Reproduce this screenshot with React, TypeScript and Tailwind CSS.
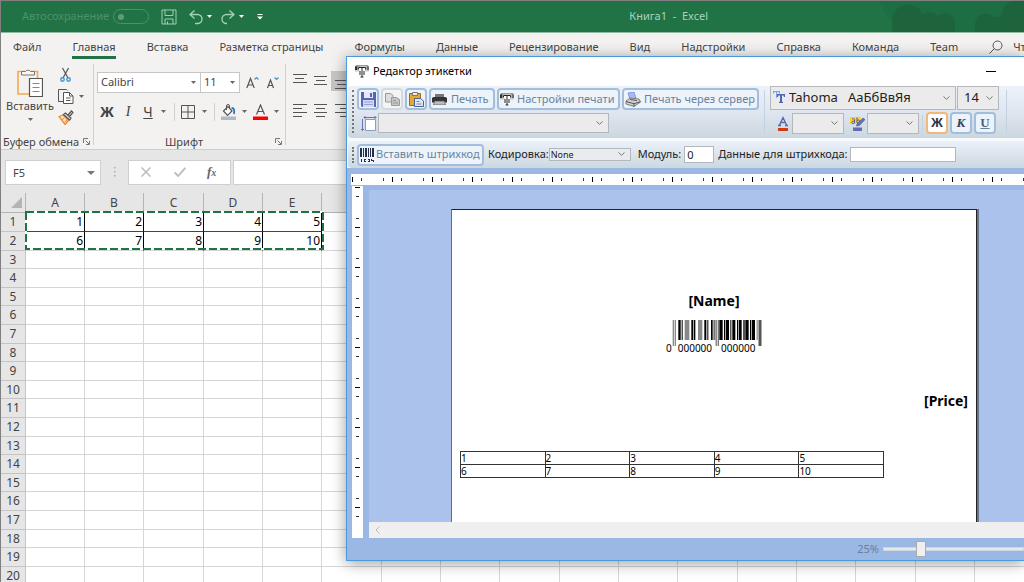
import type { ReactNode } from 'react'

const TABS = [
  'Файл',
  'Главная',
  'Вставка',
  'Разметка страницы',
  'Формулы',
  'Данные',
  'Рецензирование',
  'Вид',
  'Надстройки',
  'Справка',
  'Команда',
  'Team',
]
const COLUMNS = 'ABCDEFGHIJKLMNOPQ'.split('')
const ROWS = Array.from({ length: 20 }, (_, i) => i + 1)
const DATA = [
  [1, 2, 3, 4, 5],
  [6, 7, 8, 9, 10],
]

// x, width, height, fill
const BARS: [number, number, number, string][] = [
  [2, 4, 78, '#888'],
  [8, 4, 78, '#888'],
  [19, 7, 60, '#000'],
  [29, 3, 60, '#000'],
  [38, 14, 60, '#888'],
  [58, 5, 60, '#000'],
  [65, 5, 60, '#000'],
  [78, 13, 60, '#888'],
  [97, 6, 60, '#000'],
  [106, 3, 60, '#000'],
  [117, 5, 60, '#000'],
  [124, 6, 60, '#777'],
  [131, 3, 78, '#555'],
  [137, 4, 78, '#777'],
  [142, 10, 60, '#000'],
  [156, 4, 60, '#000'],
  [162, 9, 60, '#000'],
  [175, 3, 60, '#000'],
  [181, 9, 60, '#000'],
  [195, 4, 60, '#000'],
  [201, 8, 60, '#000'],
  [214, 4, 60, '#000'],
  [220, 10, 60, '#000'],
  [234, 4, 60, '#000'],
  [240, 9, 60, '#000'],
  [254, 3, 60, '#777'],
  [260, 3, 78, '#000'],
  [265, 3, 78, '#000'],
]

function Caret({ className = '' }: { className?: string }) {
  return (
    <svg className={`h-[3px] w-[5px] shrink-0 ${className}`} viewBox="0 0 5 3">
      <path d="M0 0h5L2.500 3z" fill="#666" />
    </svg>
  )
}

function Separator({ className = '' }: { className?: string }) {
  return <div className={`w-px shrink-0 ${className}`} />
}

function Launcher() {
  return (
    <svg className="h-[7px] w-[7px]" viewBox="0 0 7 7" fill="none" stroke="#777">
      <path d="M.5 5V.5H5M2.500 2.500l3.500 3.500M6.500 3v3.500H3" />
    </svg>
  )
}

type DropdownProps = {
  label: string
  value: string
  className: string
  textClass?: string
  flat?: boolean
}

function Dropdown({ label, value, className, textClass = '', flat }: DropdownProps) {
  return (
    <div
      className={`relative shrink-0 border ${
        flat ? 'border-[#c6c6c6] bg-white' : 'border-[#b4b7bb] bg-[#ebebeb]'
      } ${className}`}
    >
      <select
        aria-label={label}
        defaultValue={value}
        className={`block h-full w-full appearance-none bg-transparent outline-none ${textClass}`}
      >
        <option value={value}>{value}</option>
      </select>
      {flat ? (
        <Caret className="pointer-events-none absolute top-2 right-1" />
      ) : (
        <svg
          className="pointer-events-none absolute inset-y-0 right-[5px] my-auto h-1 w-[7px]"
          viewBox="0 0 7 4"
          fill="none"
          stroke="#777"
        >
          <path d="M.5.5l3 2.800 3-2.800" />
        </svg>
      )}
    </div>
  )
}

type ToolButtonProps = {
  children: ReactNode
  label?: string
  className?: string
  tone?: 'blue' | 'gray' | 'orange'
}

function ToolButton({ children, label, className = '', tone = 'blue' }: ToolButtonProps) {
  const tones = {
    blue: 'border-[#a3bedb] bg-[#edf3fa]',
    gray: 'border-[#d5dade] bg-[#f2f4f6]',
    orange: 'border-[#f2b878] bg-white',
  }
  return (
    <button
      type="button"
      aria-label={label}
      className={`flex h-[22px] shrink-0 items-center rounded-sm border-2 text-[11px] whitespace-nowrap text-[#68839f] ${tones[tone]} ${className}`}
    >
      {children}
    </button>
  )
}

function LabelPrinterIcon() {
  return (
    <svg className="h-[15px] w-4 shrink-0" viewBox="0 0 16 15">
      <path d="M2 1h12l1 2v4H1V3z" fill="#9a9a9a" />
      <path d="M1 2.500h5V6H1z" fill="#2e2e2e" />
      <path d="M11 2.500h4V6h-4z" fill="#6a6a6a" />
      <path d="M1 6h14v1.500H1z" fill="#c9c9c9" />
      <path d="M3.500 2.500h9v3.500H11v8H5.500V6h-2z" fill="#fff" />
      <path
        d="M4.500 5.500V3.500h7v2M8 3.500v9.500M6.500 13h3M6 7v4M10 7v4"
        fill="none"
        stroke="#222"
      />
    </svg>
  )
}

function TitleBar() {
  return (
    <header className="flex h-8 shrink-0 items-center border-b border-[#8fbaa2] bg-[#217346]">
      <label className="ml-[21px] flex items-center gap-[4px] text-[11px] text-[#4d9169]">
        Автосохранение
        <input
          type="checkbox"
          disabled
          className="flex h-[15px] w-9 appearance-none items-center rounded-full border border-[#4d9169] pl-1 before:size-1.5 before:rounded-full before:bg-[#5d9c77]"
        />
      </label>
      <button type="button" aria-label="Сохранить" className="ml-3">
        <svg className="size-4" viewBox="0 0 16 16" fill="none" stroke="#9fd0b3">
          <path d="M1 1h14v14H1zM4 1v5.500h8V1M4 15v-5h8v5M6.500 15v-2.500" />
        </svg>
      </button>
      <button type="button" aria-label="Отменить" className="ml-3 flex items-center gap-1">
        <svg className="h-4 w-[14px]" viewBox="0 0 14 16" fill="none" stroke="#9fd0b3" strokeWidth="1.400">
          <path d="M5.500 1.500L1 5.500l4.500 4M1 5.500h7.500a4.300 4.300 0 010 9H6" />
        </svg>
        <svg className="h-[3px] w-[5px]" viewBox="0 0 5 3">
          <path d="M0 0h5L2.500 3z" fill="#fff" />
        </svg>
      </button>
      <button type="button" aria-label="Вернуть" className="ml-[9px] flex items-center gap-1">
        <svg className="h-4 w-[14px]" viewBox="0 0 14 16" fill="none" stroke="#9fd0b3" strokeWidth="1.400">
          <path d="M8.500 1.500l4.500 4-4.500 4M13 5.500H5.500a4.300 4.300 0 000 9H6" />
        </svg>
        <svg className="h-[3px] w-[5px]" viewBox="0 0 5 3">
          <path d="M0 0h5L2.500 3z" fill="#fff" />
        </svg>
      </button>
      <button type="button" aria-label="Настройка панели" className="ml-[13px]">
        <svg className="h-[6px] w-[6px]" viewBox="0 0 6 6" fill="#fff">
          <path d="M.5 0h5v1h-5zM0 2.500h6L3 5.500z" />
        </svg>
      </button>
      <h1 className="ml-auto text-[11px] whitespace-pre text-[#a9d3ba]">Книга1  -  Excel</h1>
      <svg className="h-[31px] w-[316px] shrink-0" viewBox="0 0 316 31" fill="#1d623b">
        <path d="M170 0h146v31H190z" fill="#1e6c41" opacity=".7" />
        <path
          d="M184 31v-12a16 16 0 0131-5 10 10 0 0115 1 10 10 0 0117 7v9zM267 31v-8a11 11 0 0119-7 10 10 0 017 1 18 18 0 0123-18v32z"
          opacity=".75"
        />
      </svg>
    </header>
  )
}

function TabStrip() {
  return (
    <nav className="flex h-[30px] shrink-0 items-start gap-[31px] overflow-hidden bg-[#f3f2f1] pl-3 text-[11px] whitespace-nowrap text-[#444]">
      {TABS.map((tab) => (
        <button
          key={tab}
          type="button"
          className={`h-[26px] shrink-0 border-b-[3px] pt-[5px] ${
            tab === 'Главная' ? 'border-[#217346]' : 'border-transparent'
          }`}
        >
          {tab}
        </button>
      ))}
      <button type="button" className="flex h-[28px] shrink-0 items-center gap-[10px]">
        <svg className="size-[14px]" viewBox="0 0 14 14" fill="none" stroke="#555">
          <circle cx="8.500" cy="5.500" r="4.500" />
          <path d="M5.300 8.700L.5 13.500" />
        </svg>
        Что вы хотите сделать?
      </button>
    </nav>
  )
}

function AlignIcon({ lines }: { lines: [number, number, number][] }) {
  return (
    <svg className="h-5 w-[14px]" viewBox="0 0 14 20" stroke="#555">
      {lines.map(([x, y, w]) => (
        <path key={y} d={`M${x} ${y}.5h${w}`} />
      ))}
    </svg>
  )
}

function Ribbon() {
  return (
    <div className="flex h-[87px] shrink-0 items-stretch overflow-hidden border-b border-[#d0cecc] bg-[#f3f2f1] text-[11px] text-[#444]">
      <section className="flex w-[92px] shrink-0 flex-col">
        <div className="flex min-h-0 flex-1 pt-1 pl-[5px]">
          <button type="button" className="flex w-12 flex-col items-center justify-start">
            <svg className="h-[30px] w-[26px] shrink-0" viewBox="0 0 26 30" fill="none">
              <path d="M1 4.500h19.500V27H1z" stroke="#f5a94e" strokeWidth="1.600" />
              <path d="M4.500 8V4.500h4a3 3 0 015 0h4V8z" fill="#f8f8f8" stroke="#777" />
              <path d="M12.500 11.500h13v18h-13z" fill="#fff" stroke="#555" strokeWidth="1.200" />
              <path d="M15.500 16.500h7M15.500 20.500h7M15.500 24.500h7" stroke="#888" />
            </svg>
            <span className="mt-[1px] leading-4">Вставить</span>
            <Caret className="mt-1" />
          </button>
          <div className="ml-1 flex flex-col items-start gap-[6px]">
            <button type="button" aria-label="Вырезать" className="pl-[2px]">
              <svg className="h-4 w-[11px]" viewBox="0 0 11 16" fill="none" stroke="#555" strokeWidth="1.200">
                <path d="M2.500 1l5.500 10M8.500 1L3 11" />
                <g stroke="#3a96d6" strokeWidth="1.400">
                  <circle cx="2.500" cy="12.500" r="1.700" />
                  <circle cx="8.500" cy="12.500" r="1.700" />
                </g>
              </svg>
            </button>
            <button type="button" aria-label="Копировать" className="flex items-center gap-[5px]">
              <svg className="h-[15px] w-4" viewBox="0 0 16 15" fill="none" stroke="#555">
                <path d="M5 12.500H.5V.5h8l1 1" />
                <path d="M5.500 3.500h6l3.500 3.500v7.500H5.500z" fill="#fff" />
                <path d="M11.500 3.500V7H15M8 9h4.500M8 11.500h4.500" />
              </svg>
              <Caret />
            </button>
            <button type="button" aria-label="Формат по образцу">
              <svg className="h-[15px] w-4" viewBox="0 0 16 15" fill="none">
                <path d="M1 6.500l4-1.500 5.500 5.500L7 14.500z" fill="#fbe0c0" stroke="#ee8b3a" strokeWidth="1.300" />
                <path d="M4 10l2-2M6.500 12.500L9 10" stroke="#ee8b3a" />
                <path d="M5.500 4.500l2-1.500 5.500 5-1.500 2zM10 5l3.500-4 1.500 1.500L11.500 6.500" fill="#ddd" stroke="#555" strokeWidth="1.200" />
              </svg>
            </button>
          </div>
        </div>
        <footer className="flex h-[15px] shrink-0 items-center justify-between pr-[3px] pl-[2px] leading-3">
          Буфер обмена
          <Launcher />
        </footer>
      </section>
      <Separator className="mt-px mb-1 bg-[#d2d0ce]" />
      <section className="flex w-[191px] shrink-0 flex-col">
        <div className="flex-1 pt-[9px] pl-[3px]">
          <div className="flex items-center">
            <Dropdown flat label="Шрифт" value="Calibri" className="h-[21px] w-[104px]" textClass="pl-[3px] text-[11px]" />
            <Dropdown flat label="Размер шрифта" value="11" className="-ml-px h-[21px] w-10" textClass="pl-[3px] text-[11px]" />
            <button type="button" aria-label="Увеличить размер" className="ml-[6px]">
              <svg className="h-[14px] w-[13px]" viewBox="0 0 13 14" fill="none" stroke="#555" strokeWidth="1.200">
                <path d="M.8 12L4.500 2.500 8.200 12M2 9h5" />
                <path d="M8.500 3.500l2-2 2 2" stroke="#3a96d6" />
              </svg>
            </button>
            <button type="button" aria-label="Уменьшить размер" className="ml-[7px]">
              <svg className="h-[14px] w-[13px]" viewBox="0 0 13 14" fill="none" stroke="#555" strokeWidth="1.200">
                <path d="M1.500 12l3-8 3 8M2.500 9.500h4" />
                <path d="M8.500 1.500l2 2 2-2" stroke="#3a96d6" />
              </svg>
            </button>
          </div>
          <div className="mt-2 flex h-[21px] items-center text-[14px]">
            <button type="button" className="w-5 font-bold">Ж</button>
            <button type="button" className="ml-[2px] w-[18px] font-['Liberation_Serif',serif] italic">I</button>
            <button type="button" className="ml-[2px] w-[18px] underline">Ч</button>
            <Caret className="ml-1" />
            <Separator className="ml-2 h-[18px] bg-[#d2d0ce]" />
            <button type="button" aria-label="Границы" className="ml-[6px] flex items-center gap-[7px]">
              <svg className="size-[14px]" viewBox="0 0 14 14" fill="none" stroke="#555">
                <path d="M.5.5h13v13H.5zM7 .5v13M.5 7h13" />
              </svg>
              <Caret />
            </button>
            <Separator className="ml-[7px] h-[18px] bg-[#d2d0ce]" />
            <button type="button" aria-label="Цвет заливки" className="ml-[6px] flex items-center gap-[6px]">
              <svg className="h-4 w-[15px]" viewBox="0 0 15 16" fill="none">
                <path d="M2.500 7L7 2.500l4 4.500-4.500 4.500z" fill="#fff" stroke="#555" strokeWidth="1.200" />
                <path d="M5.500 6V2a1.500 1.500 0 013 0v2.500" stroke="#555" />
                <path d="M10.500 4c3 0 3 2.500 2.500 6" stroke="#2f75b5" strokeWidth="1.800" />
                <path d="M0 12.500h15V16H0z" fill="#adb9ca" />
              </svg>
              <Caret />
            </button>
            <button type="button" aria-label="Цвет текста" className="ml-[6px] flex items-center gap-[6px]">
              <svg className="h-4 w-[15px]" viewBox="0 0 15 16" fill="none">
                <path d="M3.500 10.500L7.500 1l4 9.500M5 7.500h5" stroke="#555" strokeWidth="1.200" />
                <path d="M0 12.500h15V16H0z" fill="#f00" />
              </svg>
              <Caret />
            </button>
          </div>
        </div>
        <footer className="flex h-[15px] shrink-0 items-center pr-[3px] pl-[3px] leading-3">
          <span className="flex-1 pr-1 text-center">Шрифт</span>
          <Launcher />
        </footer>
      </section>
      <Separator className="mt-px mb-1 bg-[#d2d0ce]" />
      <section className="flex flex-col gap-[9px] pt-2 pl-[7px]">
        <div className="flex">
          <button type="button" aria-label="По верхнему краю" className="w-[20px]">
            <AlignIcon lines={[[0, 3, 14], [2, 7, 9], [0, 11, 14]]} />
          </button>
          <button type="button" aria-label="По середине" className="w-[18px] pl-[1px]">
            <AlignIcon lines={[[0, 5, 13], [2, 9, 9], [0, 13, 13]]} />
          </button>
          <button type="button" aria-label="По нижнему краю" className="bg-[#c8c6c4] px-1">
            <AlignIcon lines={[[0, 9, 14], [2, 13, 9], [0, 17, 14]]} />
          </button>
        </div>
        <div className="flex">
          <button type="button" aria-label="По левому краю" className="w-[20px]">
            <AlignIcon lines={[[0, 4, 14], [0, 8, 9], [0, 12, 14], [0, 16, 9]]} />
          </button>
          <button type="button" aria-label="По центру" className="w-[18px] pl-[1px]">
            <AlignIcon lines={[[0, 4, 13], [2, 8, 9], [0, 12, 13], [2, 16, 9]]} />
          </button>
          <button type="button" aria-label="По правому краю" className="px-1">
            <AlignIcon lines={[[0, 4, 14], [5, 8, 9], [0, 12, 14], [5, 16, 9]]} />
          </button>
        </div>
      </section>
    </div>
  )
}

function FormulaBar() {
  return (
    <div className="flex h-[43px] shrink-0 items-center bg-[#e6e6e6] pt-px pl-1">
      <div className="relative h-[25px] w-24 border border-[#cfcfcf] bg-white">
        <input
          aria-label="Имя ячейки"
          defaultValue="F5"
          className="block h-full w-full pl-[7px] text-[11px] text-[#444] outline-none"
        />
        <svg className="pointer-events-none absolute top-[10px] right-[5px] h-1 w-2" viewBox="0 0 8 4">
          <path d="M0 0h8L4 4z" fill="#777" />
        </svg>
      </div>
      <svg className="ml-3 h-[10px] w-[3px]" viewBox="0 0 3 10" fill="#aaa">
        <path d="M1 0h1.500v1.500H1zM1 4h1.500v1.500H1zM1 8h1.500v1.500H1z" />
      </svg>
      <div className="ml-3 flex h-[25px] w-[103px] shrink-0 items-center border border-[#cfcfcf] bg-white">
        <button type="button" aria-label="Отмена" className="ml-3">
          <svg className="size-[10px]" viewBox="0 0 10 10" stroke="#bbb" strokeWidth="1.500">
            <path d="M.5.5l9 9M9.500.5l-9 9" />
          </svg>
        </button>
        <button type="button" aria-label="Ввод" className="ml-[23px]">
          <svg className="h-[10px] w-3" viewBox="0 0 12 10" fill="none" stroke="#bbb" strokeWidth="1.800">
            <path d="M.7 5.500L4.200 9 11.300.8" />
          </svg>
        </button>
        <button
          type="button"
          className="ml-[21px] font-['Liberation_Serif',serif] text-[13px] font-bold text-[#666] italic"
        >
          f<span className="text-[10px]">x</span>
        </button>
      </div>
      <input
        aria-label="Строка формул"
        className="ml-[2px] h-[25px] min-w-0 flex-1 border border-[#cfcfcf] bg-white outline-none"
      />
    </div>
  )
}

function Sheet() {
  return (
    <div className="relative min-h-0 flex-1 overflow-hidden bg-white">
      <table className="w-max table-fixed border-separate border-spacing-0 text-[12px] leading-4">
        <thead>
          <tr className="h-5 bg-[#e6e6e6] text-[#444]">
            <th className="w-[25px] border-r border-b border-[#b4b4b4] p-0">
              <svg className="ml-[10px] size-[11px]" viewBox="0 0 11 11">
                <path d="M11 0v11H0z" fill="#b4b4b4" />
              </svg>
            </th>
            {COLUMNS.map((col, i) => (
              <th
                key={col}
                className={`border-r border-b border-[#b4b4b4] p-0 font-normal ${
                  i % 3 === 2 ? 'w-[60px]' : 'w-[59px]'
                }`}
              >
                {col}
              </th>
            ))}
          </tr>
        </thead>
        <tbody>
          {ROWS.map((row) => (
            <tr key={row} className={row % 5 === 3 || row % 5 === 0 ? 'h-[18px]' : 'h-[19px]'}>
              <th className="border-r border-b border-[#c4c4c4] bg-[#e6e6e6] p-0 font-normal text-[#444]">
                {row}
              </th>
              {COLUMNS.map((col, i) => {
                const value = DATA[row - 1]?.[i]
                return (
                  <td
                    key={col}
                    className={`border-r border-b p-0 pr-[1px] text-right text-black ${
                      value === undefined
                        ? 'border-[#d6d6d6]'
                        : row === 1
                          ? 'border-r-black border-b-[#444]'
                          : 'border-r-black border-b-[#d6d6d6]'
                    }`}
                  >
                    {value}
                  </td>
                )
              })}
            </tr>
          ))}
        </tbody>
      </table>
      <svg className="pointer-events-none absolute top-[18px] left-6 h-10 w-[300px]" fill="none">
        <rect x="1" y="1" width="297" height="37" stroke="#fff" strokeWidth="2" />
        <rect x="1" y="1" width="297" height="37" stroke="#217346" strokeWidth="2" strokeDasharray="8 3" />
      </svg>
    </div>
  )
}

function Grip({ className = '' }: { className?: string }) {
  return <div className={`w-0 shrink-0 border-l-2 border-dotted border-[#777] ${className}`} />
}

function MainToolbar() {
  return (
    <div className="flex h-[52px] shrink-0 overflow-hidden rounded-l bg-linear-to-b from-[#edf2fa] via-[#dfe6ef] to-[#cbd7df] pl-1">
      <Grip className="mt-1 mb-[5px]" />
      <div className="ml-[3px] flex shrink-0 flex-col gap-[3px] pt-[2px]">
        <div className="flex gap-[2px]">
          <ToolButton label="Сохранить" className="w-[22px] justify-center">
            <svg className="size-[15px] shrink-0" viewBox="0 0 15 15">
              <path d="M0 0h15v15H1l-1-1z" fill="#5b63b5" />
              <path d="M3 0h9v6H3z" fill="#e4e8fa" />
              <path d="M9 1h2v4H9z" fill="#5b63b5" />
              <path d="M2 8h11v7H2z" fill="#d5daf2" />
              <path d="M3 10h9M3 12.500h9" stroke="#9aa1d4" />
            </svg>
          </ToolButton>
          <ToolButton label="Копировать" tone="gray" className="w-[22px] justify-center">
            <svg className="h-[13px] w-[15px] shrink-0" viewBox="0 0 15 13" fill="#ddd" stroke="#9a9a9a">
              <path d="M.5.5h5l2.500 2v6.500H.5z" />
              <path d="M6.500 4.500h5l3 2v6h-8z" fill="#c4c4c4" />
              <path d="M8 7.500h3M8 10h5" stroke="#999" />
            </svg>
          </ToolButton>
          <ToolButton label="Вставить" className="w-[22px] justify-center">
            <svg className="size-[15px] shrink-0" viewBox="0 0 15 15">
              <path d="M.5 1.500h11v12H.5z" fill="#e5a92f" stroke="#9b6c12" />
              <path d="M3.500.5h5v3h-5z" fill="#eee" stroke="#777" />
              <path d="M5.500 6.500h6l3 2.500v5.500h-9z" fill="#dfe8fb" stroke="#4b5f9b" />
              <path d="M7.500 9.500h3M7.500 12h5" stroke="#6d82be" />
            </svg>
          </ToolButton>
          <ToolButton className="w-[66px] gap-1 pl-px">
            <svg className="h-[11px] w-[15px] shrink-0" viewBox="0 0 15 11">
              <path d="M3 0h9v4H3z" fill="#777" />
              <path d="M0 4l1.500-1h12L15 4v4.500H0z" fill="#333" />
              <path d="M2.500 7h10l1 4h-12z" fill="#bbb" stroke="#555" strokeWidth=".7" />
            </svg>
            Печать
          </ToolButton>
          <ToolButton className="w-[123px] gap-[2px]">
            <LabelPrinterIcon />
            Настройки печати
          </ToolButton>
          <ToolButton className="w-[137px] gap-[3px] pl-[1px]">
            <svg className="h-[15px] w-4 shrink-0" viewBox="0 0 16 15">
              <path d="M3 1l6-1 2 6-6 1.500z" fill="#a9b9f5" stroke="#6b7fd6" strokeWidth=".7" />
              <path d="M1 9l4-3 9 1 1.500 3L9 14.500 1 12z" fill="#d0d0d0" stroke="#666" strokeWidth=".8" />
              <path d="M1 9.500l8 2.200 6.500-2M9 12v2.500" stroke="#555" fill="none" />
              <path d="M5 7.500l7 1" stroke="#555" />
            </svg>
            Печать через сервер
          </ToolButton>
        </div>
        <div className="flex items-center pl-1">
          <svg className="h-[15px] w-4" viewBox="0 0 16 15" fill="none" stroke="#6675b8">
            <path d="M4.500 3.500h10v11h-10z" fill="#fff" stroke="#8d99cc" />
            <path d="M3 1.500h12M1.500 3v11.500M4.500 0L3 1.500 4.500 3M13.500 0L15 1.500 13.500 3M0 13l1.500 1.500L3 13" />
          </svg>
          <Dropdown label="Объект" value="" className="ml-px h-5 w-[231px]" />
        </div>
      </div>
      <Separator className="mx-[5px] mt-1 mb-[5px] bg-[#c3d2e0]" />
      <div className="flex shrink-0 flex-col gap-[2px]">
        <div className="flex gap-px">
          <div className="relative">
            <Dropdown
              label="Гарнитура"
              value={'Tahoma\u00a0\u00a0\u00a0АаБбВвЯя'}
              className="h-6 w-[186px]"
              textClass="pl-[18px] text-[13px] text-[#222]"
            />
            <svg className="pointer-events-none absolute top-[5px] left-[3px] h-3 w-3" viewBox="0 0 12 12">
              <path d="M0 0h7v2.500H6L5.500 1H4v6H3V1H1.500L1 2.500H0z" fill="#7aa2ef" />
              <path d="M4 3h8v3h-1l-.5-1.500H9v6l1 .5v1H6v-1l1-.5v-6H5.500L5 6H4z" fill="#5167b8" />
            </svg>
          </div>
          <Dropdown label="Кегль" value="14" className="h-6 w-[42px]" textClass="pl-[6px] text-[13px] text-[#222]" />
        </div>
        <div className="flex items-center pl-[7px]">
          <svg className="h-[15px] w-3" viewBox="0 0 12 15">
            <path d="M2.500 9L6 1.500 9.500 9M4 6.500h4.500M1 9.500h3M8 9.500h3" fill="none" stroke="#5b67ae" strokeWidth="1.300" />
            <path d="M1 12h10v3H1z" fill="#cf3a10" />
          </svg>
          <Dropdown label="Цвет шрифта" value="" className="ml-[3px] h-[21px] w-[52px]" />
          <svg className="ml-[6px] h-[15px] w-[15px]" viewBox="0 0 15 15">
            <path d="M0 1h11v7H0z" fill="#f7d232" />
            <path d="M4.500 5.500c-2-1-3 .3-2.500 1.500s2 .7 2.500 0V3.500c-.5-1-1.500-1-2.500-.5M7 1.500v5.500c2 .8 3-.5 2.500-2S8 4 7 4.500" fill="none" stroke="#555c9c" />
            <path d="M7 8l6-6 2 1.500L9.500 9.500 6.500 10z" fill="#6674bd" stroke="#434f94" strokeWidth=".6" />
            <path d="M3 11.500h9V15H3z" fill="#5f6eb5" />
          </svg>
          <Dropdown label="Цвет фона" value="" className="ml-[2px] h-[21px] w-[52px]" />
          <Separator className="mx-[3px] h-4 bg-[#c3d2e0]" />
          <div className="flex gap-[2px]">
            <ToolButton tone="orange" className="w-[22px] justify-center font-bold">
              <span className="text-[12px] text-[#273247]">Ж</span>
            </ToolButton>
            <ToolButton className="w-[22px] justify-center font-['Liberation_Serif',serif] font-bold italic">
              <span className="text-[13px] text-[#33425e]">К</span>
            </ToolButton>
            <ToolButton className="w-[22px] justify-center font-['Liberation_Serif',serif] font-bold underline">
              <span className="text-[13px] text-[#4b5f80]">U</span>
            </ToolButton>
          </div>
        </div>
      </div>
      <Separator className="ml-[7px] mt-1 mb-[5px] bg-[#c3d2e0]" />
    </div>
  )
}

function BarcodeToolbar() {
  return (
    <div className="mt-[3px] flex h-[27px] shrink-0 items-center overflow-hidden rounded-l bg-linear-to-b from-[#ecf1fa] to-[#ccd8e0] pl-1 text-[11px] whitespace-nowrap text-[#222]">
      <Grip className="h-4" />
      <ToolButton className="ml-[3px] w-[127px] gap-[2px] pl-px">
        <svg className="h-[14px] w-[14px] shrink-0" viewBox="0 0 14 14" fill="#26304a">
          <path d="M0 0h2v9H0zM3 0h1v9H3zM5 0h2v9H5zM8 0h1v9H8zM10 0h1v9h-1zM12 0h2v9h-2z" />
          <path d="M1 11h1v3H1zM4 11h2v1H5v1h1v1H4zM8 11h2v3H8v-1h1v-1H8zM11 11h1v1h2v2h-1v-1h-2z" />
        </svg>
        Вставить штрихкод
      </ToolButton>
      <label htmlFor="encoding" className="ml-1">Кодировка:</label>
      <div className="relative h-[13px] w-[82px] shrink-0 border border-[#b4b7bb] bg-[#e9ecef]">
        <select
          id="encoding"
          defaultValue="None"
          className="block h-full w-full appearance-none pl-px text-[9px] leading-[11px] outline-none"
        >
          <option>None</option>
        </select>
        <svg
          className="pointer-events-none absolute top-[3px] right-[5px] h-1 w-[7px]"
          viewBox="0 0 7 4"
          fill="none"
          stroke="#777"
        >
          <path d="M.5.5l3 2.800 3-2.800" />
        </svg>
      </div>
      <label htmlFor="module" className="ml-[7px]">Модуль:</label>
      <input
        id="module"
        defaultValue="0"
        className="ml-[3px] h-[17px] w-[30px] shrink-0 border border-[#b4b7bb] bg-white pl-[2px] outline-none"
      />
      <label htmlFor="barcode-data" className="ml-1">Данные для штрихкода:</label>
      <input
        id="barcode-data"
        className="ml-[2px] h-[15px] w-[106px] shrink-0 border border-[#b4b7bb] bg-white outline-none"
      />
    </div>
  )
}

function Barcode() {
  return (
    <div className="flex w-[96px] flex-col">
      <svg className="ml-[6px] h-[26px] w-[90px]" viewBox="0 0 270 78">
        {BARS.map(([x, w, h, fill]) => (
          <rect key={x} x={x} y="0" width={w} height={h} fill={fill} />
        ))}
      </svg>
      <div className="-mt-1 flex text-[10px] leading-3">
        <span>0</span>
        <span className="ml-[6px]">000000</span>
        <span className="ml-[9px]">000000</span>
      </div>
    </div>
  )
}

function LabelPage() {
  return (
    <div className="flex w-[526px] shrink-0 flex-col border border-b-0 border-[#222] border-l-[#5d6f8c] bg-white text-black shadow-[2px_0_0_#66758c]">
      <p className="mt-[81px] text-center text-[14px] leading-5 font-bold">[Name]</p>
      <div className="mt-[9px] flex justify-center">
        <Barcode />
      </div>
      <p className="mt-[37px] pr-2 text-right text-[14px] leading-5 font-bold">[Price]</p>
      <table className="mt-10 ml-2 w-[424px] table-fixed border-collapse text-[10px] leading-3">
        <tbody>
          {DATA.map((row) => (
            <tr key={row[0]}>
              {row.map((value) => (
                <td key={value} className="border border-[#333] p-0">
                  {value}
                </td>
              ))}
            </tr>
          ))}
        </tbody>
      </table>
    </div>
  )
}

function Workspace() {
  return (
    <div className="flex min-h-0 flex-1 flex-col bg-[#9bb8e5] pt-[6px] pl-1">
      <svg className="h-[11px] w-full shrink-0 bg-white">
        <defs>
          <pattern id="ruler-x" width="40" height="11" patternUnits="userSpaceOnUse">
            <path d="M1 3h1v5H1z" fill="#000" />
            <path d="M10 4h1v3h-1zM32 4h1v3h-1z" fill="#333" />
          </pattern>
        </defs>
        <rect width="100%" height="11" fill="url(#ruler-x)" />
      </svg>
      <div className="flex min-h-0 flex-1 gap-[6px] pl-px">
        <svg className="mt-px h-full w-[11px] shrink-0 bg-white">
          <defs>
            <pattern id="ruler-y" width="11" height="40" patternUnits="userSpaceOnUse">
              <path d="M3 1h5v1H3z" fill="#000" />
              <path d="M4 10h3v1H4zM4 32h3v1H4z" fill="#333" />
            </pattern>
          </defs>
          <rect width="11" height="100%" fill="url(#ruler-y)" />
        </svg>
        <div className="mt-[5px] flex min-w-0 flex-1 flex-col">
          <div className="flex min-h-0 flex-1 items-stretch overflow-hidden bg-[#aac2ec] pt-[19px] pl-[82px]">
            <LabelPage />
          </div>
          <div className="h-4 shrink-0 bg-[#efefef]">
            <button type="button" aria-label="Прокрутить влево" className="flex h-full w-4 items-center justify-center">
              <svg className="h-2 w-[5px]" viewBox="0 0 5 8" fill="none" stroke="#bbb">
                <path d="M4.500.5L1 4l3.500 3.500" />
              </svg>
            </button>
          </div>
        </div>
      </div>
    </div>
  )
}

function LabelEditor() {
  return (
    <section className="absolute top-[55px] right-0 bottom-[21px] left-[345px] flex flex-col border-y border-l border-[#4a9ae0] bg-white shadow-[0_2px_14px_rgba(0,0,0,0.4)]">
      <header className="flex h-[29px] shrink-0 items-center pb-px pl-[7px]">
        <LabelPrinterIcon />
        <h2 className="ml-[3px] text-[11px] text-black">Редактор этикетки</h2>
        <button type="button" aria-label="Свернуть" className="mr-7 ml-auto h-4 w-[10px]">
          <span className="block h-px bg-black" />
        </button>
      </header>
      <div className="flex min-h-0 flex-1 flex-col">
        <div className="shrink-0 bg-[#f6f9fd] pl-px">
          <MainToolbar />
          <BarcodeToolbar />
        </div>
        <Workspace />
      </div>
      <footer className="flex h-[22px] shrink-0 items-center justify-end bg-[#9bb8e5]">
        <label htmlFor="zoom" className="text-[11px] text-[#66809f]">25%</label>
        <input
          id="zoom"
          type="range"
          defaultValue={25}
          className="ml-1 h-4 w-[141px] appearance-none bg-transparent [&::-webkit-slider-runnable-track]:h-1 [&::-webkit-slider-runnable-track]:border [&::-webkit-slider-runnable-track]:border-[#ccd5e0] [&::-webkit-slider-runnable-track]:bg-[#e6e8ea] [&::-webkit-slider-thumb]:-mt-[7px] [&::-webkit-slider-thumb]:h-4 [&::-webkit-slider-thumb]:w-[10px] [&::-webkit-slider-thumb]:appearance-none [&::-webkit-slider-thumb]:border [&::-webkit-slider-thumb]:border-[#a8abae] [&::-webkit-slider-thumb]:bg-[#efefef]"
        />
      </footer>
    </section>
  )
}

export default function App() {
  return (
    <div className="relative flex h-screen flex-col overflow-hidden border-t border-l border-[#808080] bg-[#e6e6e6] font-['Noto_Sans',sans-serif]">
      <TitleBar />
      <TabStrip />
      <Ribbon />
      <FormulaBar />
      <Sheet />
      <LabelEditor />
    </div>
  )
}
